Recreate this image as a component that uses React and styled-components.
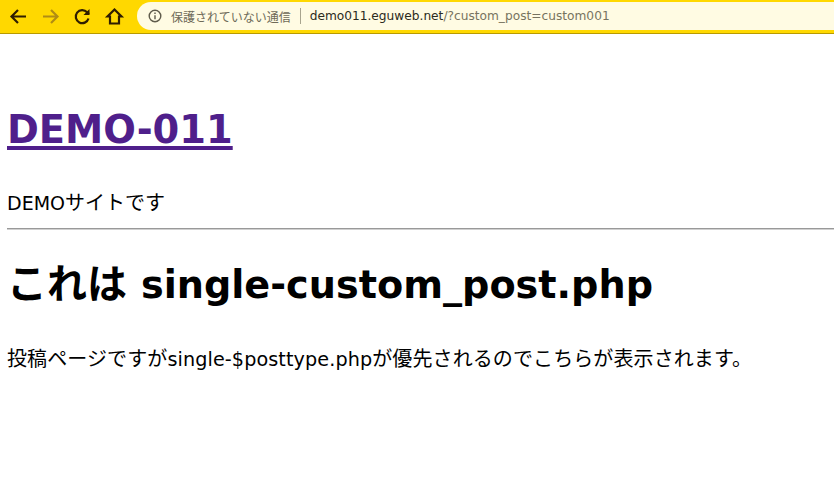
import React from 'react';
import styled, { createGlobalStyle } from 'styled-components';

const GlobalStyle = createGlobalStyle`
    html, body {
        margin: 0;
        padding: 0;
        background: #fff;
    }
    body {
        font-family: "DejaVu Sans", "Noto Sans CJK JP", sans-serif;
        color: #000;
        overflow: hidden;
    }
`;

const Toolbar = styled.header`
    display: flex;
    align-items: center;
    height: 34px;
    box-sizing: border-box;
    padding: 2px 0 3px 8px;
    background: #ffd800;
    border-bottom: 1px solid #b89a00;
`;

const NavButtons = styled.nav`
    display: flex;
    align-items: center;
    gap: 11px;
`;

const NavIcon = styled.svg`
    display: block;
    width: 21px;
    height: 21px;
    fill: none;
    stroke: ${props => (props.$disabled ? '#b08c14' : '#2f1d00')};
    stroke-width: 2.2;
`;

const AddressBar = styled.div`
    flex: 1;
    display: flex;
    align-items: center;
    height: 28px;
    margin-left: 12px;
    padding-left: 11px;
    background: #fffbe3;
    border-radius: 14px 0 0 14px;
    font-family: "Noto Sans CJK JP", sans-serif;
    font-size: 12px;
    white-space: nowrap;
`;

const InfoIcon = styled.svg`
    display: block;
    width: 14px;
    height: 14px;
    fill: none;
    stroke: #5f5b4b;
    stroke-width: 1.4;
`;

const SecurityLabel = styled.span`
    margin-left: 9px;
    color: #6e6a58;
`;

const Divider = styled.span`
    width: 1px;
    height: 16px;
    margin: 0 9px;
    background: #a8a48e;
`;

const Host = styled.span`
    font-family: "DejaVu Sans", sans-serif;
    font-size: 12.2px;
    color: #2b2a20;
`;

const Query = styled.span`
    color: #77735f;
`;

const Page = styled.main`
    padding: 0 7px;
`;

const SiteTitle = styled.h1`
    margin: 68px 0 0;
    font-size: 38.4px;
    line-height: 56px;
    font-weight: 700;

    a {
        color: #4f1f8b;
        text-decoration-thickness: 4px;
        text-underline-offset: 3px;
    }
`;

const Tagline = styled.p`
    margin: 30px 0 0;
    font-size: 20px;
    line-height: 30px;
`;

const Latin = styled.span`
    font-size: ${props => props.$size};
`;

const Rule = styled.hr`
    margin: 10px -7px 0 0;
    border: 0;
    border-top: 1px solid #999;
    border-bottom: 1px solid #d0d0d0;
`;

const PostTitle = styled.h2`
    margin: 26px 0 0;
    font-size: 40px;
    line-height: 56px;
    font-weight: 700;
`;

const PostBody = styled.p`
    margin: 31px 0 0;
    font-size: 20px;
    line-height: 30px;
    letter-spacing: 0.1px;
    white-space: nowrap;
`;

export default function App() {
    return (
        <>
            <GlobalStyle />
            <Toolbar>
                <NavButtons>
                    <NavIcon viewBox="0 0 21 21">
                        <path d="M18 10.5H4M10 4l-6.5 6.5L10 17" />
                    </NavIcon>
                    <NavIcon viewBox="0 0 21 21" $disabled>
                        <path d="M3 10.5h14M11 4l6.5 6.5L11 17" />
                    </NavIcon>
                    <NavIcon viewBox="0 0 21 21">
                        <path d="M16.5 12.5a6.5 6.5 0 1 1-1.4-6.2L17 8" />
                        <path d="M17.5 3v6h-6" fill="#2f1d00" stroke="none" />
                    </NavIcon>
                    <NavIcon viewBox="0 0 21 21">
                        <path d="M10.5 3.5L3.5 10.5H6V17.5h9v-7h2.5z" />
                    </NavIcon>
                </NavButtons>
                <AddressBar>
                    <InfoIcon viewBox="0 0 14 14">
                        <circle cx="7" cy="7" r="5.8" />
                        <path d="M7 6.2v4M7 3.6v1.4" />
                    </InfoIcon>
                    <SecurityLabel>保護されていない通信</SecurityLabel>
                    <Divider />
                    <Host>
                        demo011.eguweb.net<Query>/?custom_post=custom001</Query>
                    </Host>
                </AddressBar>
            </Toolbar>
            <Page>
                <SiteTitle>
                    <a href="#demo">DEMO-011</a>
                </SiteTitle>
                <Tagline><Latin $size="19px">DEMO</Latin>サイトです</Tagline>
                <Rule />
                <PostTitle>これは <Latin $size="38.2px">single-custom_post.php</Latin></PostTitle>
                <PostBody>投稿ページですが<Latin $size="19.2px">single-$posttype.php</Latin>が優先されるのでこちらが表示されます。</PostBody>
            </Page>
        </>
    );
}
